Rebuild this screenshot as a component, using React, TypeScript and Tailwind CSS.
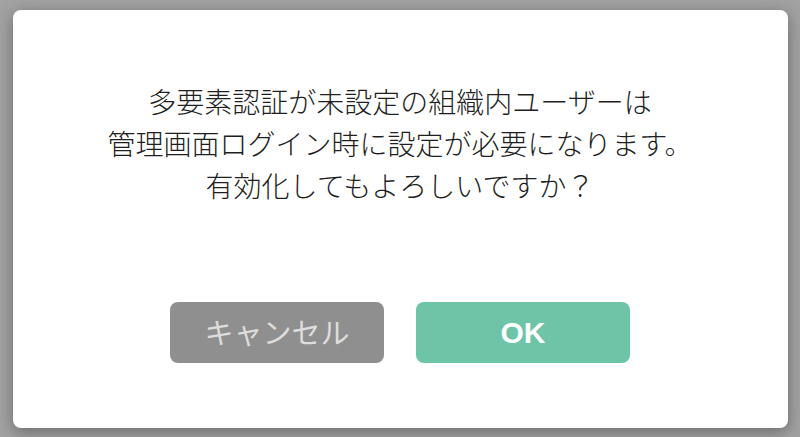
export default function App() {
  const lines = [
    "多要素認証が未設定の組織内ユーザーは",
    "管理画面ログイン時に設定が必要になります。",
    "有効化してもよろしいですか？",
  ]

  return (
    <div className="h-[437px] w-[800px] bg-[#a2a2a2] flex items-center justify-center font-['Noto_Sans_CJK_JP',sans-serif]">
      <div className="w-[775px] h-[418px] bg-white rounded-[8px] shadow-[0_4px_16px_rgba(0,0,0,0.35)] flex flex-col items-center pt-[70px]">
        <div className="text-[28px] leading-[42px] font-light text-[#1f1f1f] text-center">
          {lines.map((line, i) => (
            <p key={i}>{line}</p>
          ))}
        </div>
        <div className="flex gap-[32px] mt-[96px]">
          <button className="w-[214px] h-[61px] rounded-[8px] bg-[#8f8f8f] text-[#dddddd] text-[29px]">
            キャンセル
          </button>
          <button className="w-[214px] h-[61px] rounded-[8px] bg-[#6ec4a7] text-white text-[30px] font-bold font-['Liberation_Sans',sans-serif]">
            OK
          </button>
        </div>
      </div>
    </div>
  )
}
